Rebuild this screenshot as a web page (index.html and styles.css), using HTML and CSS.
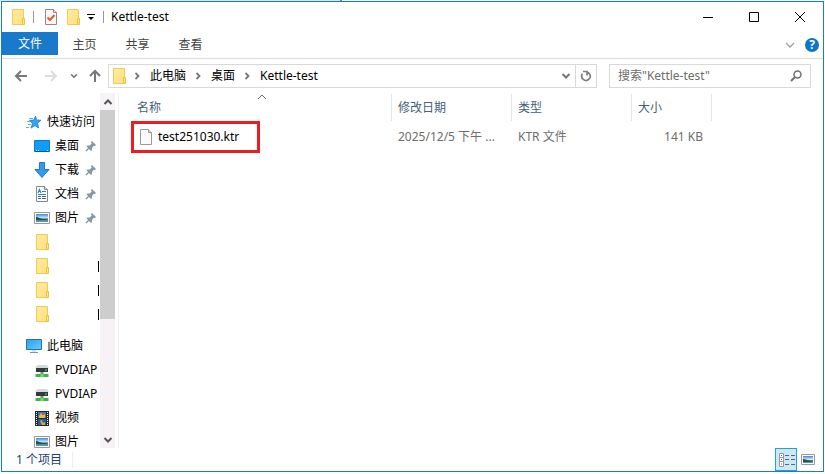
FILE: index.html
```html
<!DOCTYPE html>
<html lang="zh-CN">
<head>
<meta charset="utf-8">
<title>Kettle-test</title>
<link rel="stylesheet" href="styles.css">
</head>
<body>
<svg class="defs" aria-hidden="true">
  <defs>
    <linearGradient id="gold" x1="0" x2="1" y1="0" y2="1"><stop offset="0" stop-color="#ffeaa3"/><stop offset="1" stop-color="#ffe07c"/></linearGradient>
    <linearGradient id="screen" x1="0" x2="1" y1="0" y2="1"><stop offset="0" stop-color="#25a0f5"/><stop offset="1" stop-color="#6accff"/></linearGradient>
    <linearGradient id="scene" x1="0" x2="0" y1="0" y2="1"><stop offset="0" stop-color="#3c86d8"/><stop offset=".5" stop-color="#d4ecf8"/><stop offset=".6" stop-color="#49746d"/><stop offset="1" stop-color="#5b9bd0"/></linearGradient>
    <symbol id="folder" viewBox="0 0 16 16"><path d="M2.500.5h11v15h-11z" fill="url(#gold)" stroke="#f2cc50"/><path d="M12.500 9.500h2v6h-2z" fill="#ffe58e" stroke="#eec13c"/></symbol>
    <symbol id="page" viewBox="0 0 16 16"><path d="M2.500.5h8l3 3v12h-11z" fill="#fafafa" stroke="#9a9a9a"/><path d="M10.500.5v3h3" fill="#ddd" stroke="#9a9a9a"/></symbol>
    <symbol id="check" viewBox="0 0 16 16"><path d="M2.500.5h8l3 3v12h-11z" fill="#f7f7f9" stroke="#8b8b90"/><path d="M10.500.5v3h3" fill="#ddd" stroke="#8b8b90"/><path d="M4.500 8.500l2.500 2.500 4.500-5" fill="none" stroke="#ee5a20" stroke-width="2"/></symbol>
    <symbol id="star" viewBox="0 0 16 16"><path d="M9.500 2l1.200 4 4.300.2-3.400 3 1 4.800-3.600-2.400-4 2.500 1.500-4.500L3.500 6.300l4.200-.2z" fill="#35a5ee" stroke="#1581cc" stroke-width=".8"/><path d="M3 4.500h4M1 7.500h3M2 10.500h3M0 13.500h3" stroke="#56b5ef"/></symbol>
    <symbol id="desktop" viewBox="0 0 16 16"><path d="M.5 2.500h15v11H.5z" fill="#109cfc" stroke="#087dcc"/><path d="M1 13.500h14" stroke="#075b94"/><path d="M2 12.500h1m1 0h1m8 0h1" stroke="#b8e5ff"/></symbol>
    <symbol id="download" viewBox="0 0 16 16"><path d="M5.500.5h5v7h4.500L8 15.500 1 7.500h4.500z" fill="#3599ee" stroke="#1979c9"/></symbol>
    <symbol id="document" viewBox="0 0 16 16"><path d="M2.500.5h8l3 3v12h-11z" fill="#fff" stroke="#85898c"/><path d="M10.500.5v3h3" fill="#ddd" stroke="#85898c"/><path d="M4 7l1.500-3.500L7 7M8 5.500h4M4 8.500h8" fill="none" stroke="#1e88d8" stroke-width="1.200"/><path d="M4 10.500h3m-3 2h3m1 0h4M8 10.500h4" stroke="#53656f"/></symbol>
    <symbol id="picture" viewBox="0 0 16 16"><path d="M.5 2.500h15v11H.5z" fill="#fff" stroke="#989898"/><path d="M2 4h12v8H2z" fill="url(#scene)"/><path d="M2 7c3 0 4 2 8 2l4 1H2z" fill="#24564e"/></symbol>
    <symbol id="pc" viewBox="0 0 16 16"><path d="M.5 1.500h15v10H.5z" fill="url(#screen)" stroke="#346d94"/><path d="M6 12h4v2H6z" fill="#d1e2ec"/><path d="M4 14.500h8" stroke="#7998ac"/></symbol>
    <symbol id="drive" viewBox="0 0 16 16"><path d="M3 3h10l2 3H1z" fill="#d7d9db"/><path d="M2 6h12v4H2z" fill="#35393b"/><path d="M11 8h2" stroke="#3ff371"/><path d="M6.500 10h3v2h5v3h-13v-3h5z" fill="#43b04b"/><path d="M6.500 12h3v3h-3z" fill="#77d879"/></symbol>
    <symbol id="film" viewBox="0 0 16 16"><path d="M1 1h14v15H1z" fill="#292929"/><path d="M4 2h8v6H4z" fill="#3777c5"/><path d="M4 9h8v6H4z" fill="#245ca9"/><path d="M5 6l2-3 2 2 2-1v4H5z" fill="#edbd2d"/><path d="M6 11l2-1 1 3 2-1v3H8z" fill="#e2a62e"/><path d="M8 3h2v2H8z" fill="#d34c35"/><path d="M2.500 2v14m11-14v14" stroke="#eee" stroke-dasharray="1 1"/></symbol>
    <symbol id="pin" viewBox="0 0 12 12"><path d="M7 1l4 4-1 1-1-.2-2 2v2.200l-1 1L1.500 6.500l1-1h2.200l2-2L6 2z" fill="#8598a4"/><path d="M4 8L1 11" stroke="#8598a4" stroke-width="1.300"/></symbol>
    <symbol id="down" viewBox="0 0 10 10"><path d="M1.500 3L5 6.500 8.500 3" fill="none" stroke="currentColor" stroke-width="2"/></symbol>
    <symbol id="right" viewBox="0 0 10 10"><path d="M3.500 2l3 3-3 3" fill="none" stroke="currentColor" stroke-width="1.800"/></symbol>
    <symbol id="arrow" viewBox="0 0 14 14"><path d="M13 7H2m5-5L2 7l5 5" fill="none" stroke="currentColor" stroke-width="2"/></symbol>
  </defs>
</svg>
<div class="window">
  <header class="titlebar">
    <svg class="icon"><use href="#folder"/></svg>
    <span class="rule"></span>
    <button class="quick" aria-label="属性"><svg class="icon"><use href="#check"/></svg></button>
    <button class="quick" aria-label="新建文件夹"><svg class="icon"><use href="#folder"/></svg></button>
    <button class="customize" aria-label="自定义"><svg width="8" height="8" viewBox="0 0 8 8"><path d="M0 1.500h8" stroke="#000"/><path d="M1 4h6L4 7z"/></svg></button>
    <span class="rule"></span>
    <h1 class="title">Kettle-test</h1>
    <div class="caption">
      <button aria-label="最小化"><svg width="12" height="12"><path d="M1 6.500h10" stroke="#000"/></svg></button>
      <button aria-label="最大化"><svg width="12" height="12"><path d="M1.500 1.500h9v9h-9z" fill="none" stroke="#000"/></svg></button>
      <button aria-label="关闭"><svg width="12" height="12"><path d="M1 1l10 10m0-10L1 11" stroke="#000"/></svg></button>
    </div>
  </header>
  <nav class="tabs">
    <button class="tab file">文件</button>
    <button class="tab">主页</button>
    <button class="tab">共享</button>
    <button class="tab">查看</button>
    <button class="expand" aria-label="展开功能区"><svg width="10" height="10" viewBox="0 0 10 10"><path d="M1 3l4 4 4-4" fill="none" stroke="#a0a0a0" stroke-width="1.300"/></svg></button>
    <button class="help" aria-label="帮助">?</button>
  </nav>
  <div class="navbar">
    <div class="history">
      <button class="arrow" aria-label="后退"><svg><use href="#arrow"/></svg></button>
      <button class="arrow off" aria-label="前进"><svg class="flip"><use href="#arrow"/></svg></button>
      <button class="recent" aria-label="最近"><svg><use href="#down"/></svg></button>
      <button class="arrow" aria-label="上移"><svg class="upward"><use href="#arrow"/></svg></button>
    </div>
    <div class="address">
      <svg class="icon"><use href="#folder"/></svg>
      <svg class="crumb"><use href="#right"/></svg>
      <a href="#">此电脑</a>
      <svg class="crumb"><use href="#right"/></svg>
      <a href="#">桌面</a>
      <svg class="crumb"><use href="#right"/></svg>
      <a href="#">Kettle-test</a>
      <button class="drop" aria-label="历史地址"><svg><use href="#down"/></svg></button>
      <button class="refresh" aria-label="刷新"><svg width="12" height="12" viewBox="0 0 12 12"><path d="M2.500 3.800A4.200 4.200 0 1 0 9.200 3.500L7 2M3 1.500h4v4" fill="none" stroke="#808080" stroke-width="1.700"/></svg></button>
    </div>
    <label class="search">
      <input type="text" placeholder="搜索&quot;Kettle-test&quot;" aria-label="搜索">
      <svg width="12" height="12" viewBox="0 0 12 12"><circle cx="7.500" cy="4.500" r="3.500" fill="none" stroke="#707070" stroke-width="1.500"/><path d="M5 7L1 11" stroke="#707070" stroke-width="2"/></svg>
    </label>
  </div>
  <div class="body">
    <aside class="sidebar">
      <ul class="tree">
        <li class="root"><svg class="icon"><use href="#star"/></svg><span>快速访问</span></li>
        <li><svg class="icon"><use href="#desktop"/></svg><span>桌面</span><svg class="pin"><use href="#pin"/></svg></li>
        <li><svg class="icon"><use href="#download"/></svg><span>下载</span><svg class="pin"><use href="#pin"/></svg></li>
        <li><svg class="icon"><use href="#document"/></svg><span>文档</span><svg class="pin"><use href="#pin"/></svg></li>
        <li><svg class="icon"><use href="#picture"/></svg><span>图片</span><svg class="pin"><use href="#pin"/></svg></li>
        <li><svg class="icon"><use href="#folder"/></svg></li>
        <li><svg class="icon"><use href="#folder"/></svg><i class="edge"></i></li>
        <li><svg class="icon"><use href="#folder"/></svg><i class="edge"></i></li>
        <li><svg class="icon"><use href="#folder"/></svg><i class="edge"></i></li>
        <li class="root second"><svg class="icon"><use href="#pc"/></svg><span>此电脑</span></li>
        <li><svg class="icon"><use href="#drive"/></svg><span>PVDIAP</span></li>
        <li><svg class="icon"><use href="#drive"/></svg><span>PVDIAP</span></li>
        <li><svg class="icon"><use href="#film"/></svg><span>视频</span></li>
        <li><svg class="icon"><use href="#picture"/></svg><span>图片</span></li>
      </ul>
      <div class="scrollbar">
        <button aria-label="向上滚动"><svg class="turn"><use href="#down"/></svg></button>
        <div class="track"><div class="thumb"></div></div>
        <button aria-label="向下滚动"><svg><use href="#down"/></svg></button>
      </div>
    </aside>
    <main class="files">
      <table>
        <thead><tr>
          <th class="name">名称<svg class="sort" width="10" height="6"><path d="M1 5l4-4 4 4" fill="none" stroke="#666"/></svg></th>
          <th class="date">修改日期</th><th class="type">类型</th><th class="size">大小</th><th class="rest"></th>
        </tr></thead>
        <tbody><tr>
          <td class="name"><span class="marked"><svg class="icon"><use href="#page"/></svg>test251030.ktr</span></td>
          <td>2025/12/5 下午 ...</td><td>KTR 文件</td><td class="amount">141 KB</td><td></td>
        </tr></tbody>
      </table>
    </main>
  </div>
  <footer class="status">
    <span class="count">1 个项目</span>
    <button class="view on" aria-label="详细信息"><svg width="17" height="14"><path d="M1.500.5h4v13h-4zm0 4h4m-4 4h4" fill="#fff" stroke="#929a9e"/><path d="M3 2.500h1m-1 4h1" stroke="#277da8"/><path d="M3 11h1" stroke="#c23b22"/><path d="M7 2.500h4m2 0h4m-10 4h4m2 0h4m-10 5h4m2 0h4" stroke="#59666b"/></svg></button>
    <button class="view" aria-label="大图标"><svg width="14" height="14" viewBox="0 0 14 14"><path d="M.5 1.500h13v10H.5z" fill="#fff" stroke="#989898"/><path d="M2 3h10v7H2z" fill="url(#scene)"/><path d="M2 6c3 0 4 1 7 2l3 1H2z" fill="#24564e"/></svg></button>
  </footer>
</div>
</body>
</html>
```
FILE: styles.css
```css
* { box-sizing: border-box; }
body {
  margin: 0;
  height: 100vh;
  padding: 1px 1px 2px;
  overflow: hidden;
  background: #fff linear-gradient(90deg, #e4e4e4 340px, #777 340px, #777 342px, #fff 342px) top / 100% 1px no-repeat;
  font: 12px/16px "Noto Sans", "Noto Sans CJK SC", sans-serif;
  color: #000;
}
button {
  display: flex;
  align-items: center;
  justify-content: center;
  padding: 0;
  border: 0;
  background: none;
  font: inherit;
  color: #777;
}
svg { display: block; flex: none; }
.defs { position: absolute; width: 0; height: 0; }
.icon { width: 16px; height: 16px; }
.window {
  display: flex;
  flex-direction: column;
  height: 100%;
  border: 1px solid #1a7dcb;
  background: #fff;
}
.titlebar {
  display: flex;
  align-items: center;
  height: 30px;
  padding-left: 8px;
}
.rule { width: 1px; height: 12px; margin: 0 8px 0 7px; background: #999; }
.customize + .rule { margin: 0 7px; }
.quick { margin-left: 1px; margin-right: 5px; }
.customize { width: 9px; margin-right: 1px; }
.title { margin: 0; font-size: 12px; font-weight: 400; }
.caption { display: flex; margin-left: auto; }
.caption button { width: 46px; height: 29px; }
.tabs {
  display: flex;
  height: 27px;
  padding-right: 4px;
  border-bottom: 1px solid #dadbdc;
}
.tab { width: 53px; height: 25px; color: #444; }
.tab.file { width: 56px; height: 23px; background: #1979ca; color: #fff; }
.expand { width: 20px; height: 26px; margin-left: auto; margin-right: 5px; }
.help {
  width: 14px;
  height: 14px;
  margin-top: 6px;
  border-radius: 50%;
  background: #0a76cc;
  color: #fff;
  font-weight: 700;
}
.navbar {
  display: flex;
  padding: 5px 12px;
}
.history { display: flex; align-items: center; width: 94px; }
.arrow svg { width: 14px; height: 14px; }
.arrow { margin-right: 16px; }
.arrow + .arrow { margin-right: 12px; }
.arrow.off { color: #ddd; }
.recent { margin-right: 10px; }
.recent svg { width: 8px; height: 8px; }
.flip { transform: scaleX(-1); }
.upward { transform: rotate(90deg); }
.address {
  flex: 1;
  display: flex;
  align-items: center;
  height: 24px;
  padding-left: 2px;
  border: 1px solid #d9d9d9;
}
.address a { color: inherit; text-decoration: none; }
.crumb { width: 10px; height: 10px; margin: 0 8px 0 5px; color: #777; }
.address a + .crumb { margin-left: 7px; }
.drop { width: 18px; height: 22px; margin-left: auto; }
.drop svg { width: 10px; height: 10px; }
.refresh { width: 21px; height: 22px; border-left: 1px solid #d9d9d9; }
.search {
  display: flex;
  align-items: center;
  width: 202px;
  height: 24px;
  margin-left: 12px;
  padding: 0 8px;
  border: 1px solid #d9d9d9;
}
.search input {
  flex: 1;
  min-width: 0;
  padding: 0;
  border: 0;
  outline: 0;
  font: inherit;
}
.search input::placeholder { color: #6d6d6d; opacity: 1; }
.body { display: flex; flex: 1; min-height: 0; }
.sidebar {
  display: flex;
  width: 117px;
  border-right: 1px solid #f0f0f0;
}
.tree {
  width: 98px;
  margin: 0;
  padding: 17px 0 0;
  overflow: hidden;
  line-height: 12px;
  list-style: none;
  white-space: nowrap;
}
.tree li {
  display: flex;
  align-items: center;
  gap: 5px;
  height: 24px;
  padding: 0 3px 0 32px;
}
.tree li.root { padding-left: 24px; }
.tree li.second { margin-top: 8px; }
.pin { width: 12px; height: 12px; margin-left: auto; }
.edge { width: 1px; height: 11px; margin-left: auto; margin-right: -2px; background: #000; }
.scrollbar {
  display: flex;
  flex-direction: column;
  width: 15px;
  background: #f6f2f6;
}
.scrollbar button { height: 17px; color: #555; }
.scrollbar svg { width: 10px; height: 10px; }
.turn { transform: rotate(180deg); }
.track { flex: 1; }
.thumb { height: 65%; background: #cdcdcd; }
.files { flex: 1; min-width: 0; padding-top: 1px; }
table {
  width: 100%;
  table-layout: fixed;
  border-collapse: separate;
  border-spacing: 0;
}
th, td { padding: 0 0 0 6px; text-align: left; white-space: nowrap; }
th {
  height: 27px;
  border-right: 1px solid #e5e5e5;
  color: #46607c;
  font-weight: 400;
}
th.name { position: relative; width: 273px; padding-left: 18px; }
th.date, th.type { width: 120px; }
th.size { width: 80px; }
th.rest { border: 0; }
.sort { position: absolute; top: 0; left: 138px; }
td { height: 32px; color: #6d6d6d; }
td.name { padding-left: 12px; }
td.amount { padding-right: 9px; text-align: right; }
.marked {
  display: flex;
  align-items: center;
  gap: 4px;
  width: 129px;
  height: 32px;
  padding-left: 4px;
  border: 3px solid #ec1c24;
  color: #000;
}
.status {
  display: flex;
  align-items: center;
  height: 23px;
  padding-right: 4px;
}
.count { padding: 0 10px 0 14px; border-right: 1px solid #eee; color: #1e3f78; }
.view { width: 22px; height: 23px; border: 1px solid transparent; }
.view.on { margin-left: auto; border-color: #26a0da; background: #cce8f6; }
```
